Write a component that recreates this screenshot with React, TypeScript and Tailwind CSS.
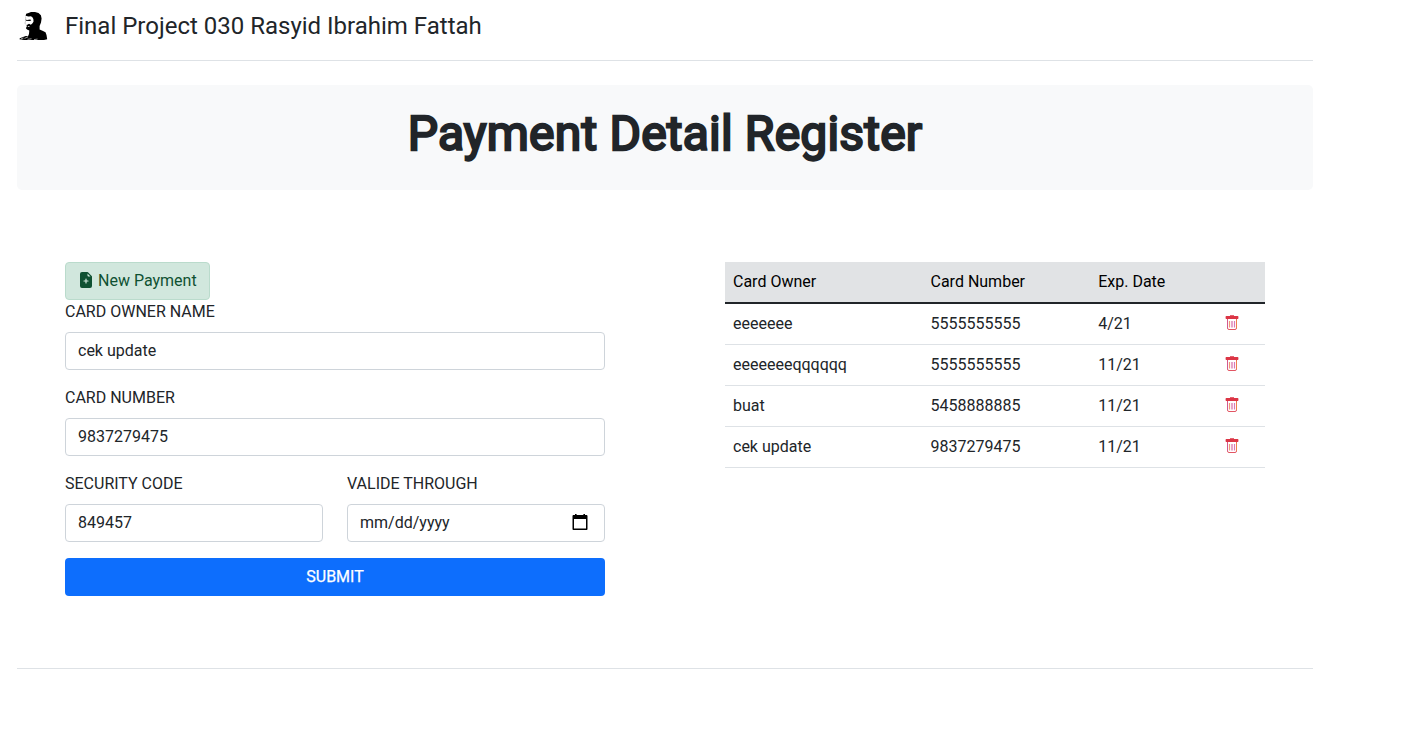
import React from "react";

const payments = [
  { owner: "eeeeeee", number: "5555555555", exp: "4/21" },
  { owner: "eeeeeeeqqqqqq", number: "5555555555", exp: "11/21" },
  { owner: "buat", number: "5458888885", exp: "11/21" },
  { owner: "cek update", number: "9837279475", exp: "11/21" },
];

function Portrait() {
  return (
    <svg width="30" height="30" viewBox="0 0 30 30" fill="#000" aria-hidden="true">
      <path d="M7.600 4.800L8.200 2.800L10.500 1.900L13 .9L17 .9L20.500 2L22.900 4.300L23.600 7.500L23 11.500L21.600 15L21.600 18.400L24.500 19.800L27.500 21.200L28.500 24L29.200 28.300L26 29H6L1.500 28.300L1.800 27.300L5 26L7.800 25L10 25.300L11 23L11.300 19.400L9.500 18.700L8.200 17.800L8 16.400L9.400 15.800L8.300 15.200L8.900 13.900L11 12.700L12.800 13.700L14.300 12.600L15.500 10.700L15.400 8.300L14.600 6.500L13 5.300L10.500 5.500Z" />
      <path d="M7.300 8.400L9 8.900L12.300 8.500L13.300 9.600L11.500 10.100L8 9.700Z" />
      <path d="M7.600 5.500L7.700 9.500L6.900 12.500L8.400 13.300" fill="none" stroke="#999" strokeWidth=".5" />
      <path d="M9.800 15.300L11.600 15.200L11.400 16.100L10 16Z" fill="#fff" />
      <path d="M6.500 27.400L10 25.900M3 27.900L5.500 27M9.500 28.300L13.500 27.800M16 28.600L19.500 28.100" fill="none" stroke="#ddd" strokeWidth=".7" />
    </svg>
  );
}

function NewFileIcon() {
  return (
    <svg width="16" height="16" viewBox="0 0 16 16" fill="currentColor" aria-hidden="true">
      <path d="M9.3 0H4a2 2 0 0 0-2 2v12a2 2 0 0 0 2 2h8a2 2 0 0 0 2-2V4.700a1 1 0 0 0-.3-.7L10 .3a1 1 0 0 0-.7-.3zm.2 3.500v-2l3 3h-2a1 1 0 0 1-1-1z" />
      <path d="M6 9h4M8 7v4" stroke="#d1e7dd" strokeWidth="1.2" strokeLinecap="round" />
    </svg>
  );
}

function TrashIcon() {
  return (
    <svg width="16" height="16" viewBox="0 0 16 16" aria-hidden="true">
      <path d="M3.500 4v9a1.500 1.500 0 0 0 1.500 1.500h6a1.500 1.500 0 0 0 1.500-1.500V4" fill="none" stroke="#e25563" />
      <path d="M3.500 4.500v8.500" stroke="#d05a9a" strokeWidth=".8" />
      <path d="M12.500 4.500v8.500" stroke="#f28a48" strokeWidth=".8" />
      <path d="M5.500 6v6.500" stroke="#ef9a78" strokeWidth="1.2" />
      <path d="M8 6v6.500" stroke="#d869a6" strokeWidth="1.2" />
      <path d="M10.500 6v6.500" stroke="#d979ba" strokeWidth="1.2" />
      <path d="M2.300 1H6V.3h4V1h3.700a.7.700 0 0 1 .7.700v1.600a.7.700 0 0 1-.7.700H2.300a.7.700 0 0 1-.7-.7V1.700a.7.700 0 0 1 .7-.7z" fill="#dc3545" />
    </svg>
  );
}

function Field({ label, value, date }: { label: string; value: string; date?: boolean }) {
  return (
    <label className="mb-4 block">
      <span className="mb-2 block leading-6">{label}</span>
      <span className="flex h-[38px] items-center justify-between rounded-[4px] border border-[#ced4da] bg-white pr-[15.5px] pb-px pl-3 leading-6">
        {value}
        {date && (
          <svg className="mb-0.5" width="18" height="18" viewBox="0 0 18 18" fill="#000" aria-hidden="true">
            <path d="M4 1h1.6v1h6.8V1H14v1h1.4c.6 0 1.1.5 1.1 1.1V16c0 .6-.5 1.1-1.1 1.1H2.6c-.6 0-1.1-.5-1.1-1.1V3.1C1.500 2.500 2 2 2.600 2H4zM3 6v9.600h12V6z" fillRule="evenodd" />
          </svg>
        )}
      </span>
    </label>
  );
}

export default function App() {
  return (
    <main className="h-[729px] overflow-hidden bg-white pl-[17px] font-[Roboto,sans-serif] text-base text-[#212529]">
      <div className="w-[1296px]">
        <header className="flex h-[61px] items-start border-b border-[#dee2e6] pt-2">
          <div className="mt-[3px] mr-[17px] ml-px h-[30px] w-[30px]">
            <Portrait />
          </div>
          <span className="text-2xl leading-9">Final Project 030 Rasyid Ibrahim Fattah</span>
        </header>

        <section className="mt-6 flex h-[105px] justify-center rounded-[5px] bg-[#f8f9fa] pt-5">
          <h1 className="text-[48px] leading-[57px] font-normal tracking-[0.2px] [-webkit-text-stroke:2.3px_#212529]">
            Payment Detail Register
          </h1>
        </section>

        <section className="grid h-[479px] grid-cols-[540px_540px] gap-[120px] border-b border-[#dee2e6] px-12 pt-[72px]">
          <form>
            <button type="button" className="flex h-[38px] w-[145px] items-center gap-1 rounded-[4px] border border-[#badbcc] bg-[#d1e7dd] pb-px pl-3 text-[#0f5132]">
              <span className="mb-0.5"><NewFileIcon /></span>
              New Payment
            </button>
            <Field label="CARD OWNER NAME" value="cek update" />
            <Field label="CARD NUMBER" value="9837279475" />
            <div className="grid grid-cols-2 gap-6">
              <Field label="SECURITY CODE" value="849457" />
              <Field label="VALIDE THROUGH" value="mm/dd/yyyy" date />
            </div>
            <button type="button" className="flex h-[38px] w-full items-center justify-center rounded-[4px] bg-[#0d6efd] pb-px text-white [-webkit-text-stroke:0.25px_#ffffff]">
              SUBMIT
            </button>
          </form>

          <table className="w-full table-fixed border-collapse self-start text-left">
            <colgroup>
              <col className="w-[197px]" />
              <col className="w-[168px]" />
              <col className="w-[127px]" />
              <col className="w-[48px]" />
            </colgroup>
            <thead>
              <tr className="h-[41px] border-b-2 border-[#212529] bg-[#e1e3e5] text-black">
                <th className="px-2 font-normal">Card Owner</th>
                <th className="pr-2 pl-[8.5px] font-normal">Card Number</th>
                <th className="pr-2 pl-[8.2px] font-normal">Exp. Date</th>
                <th />
              </tr>
            </thead>
            <tbody>
              {payments.map((payment) => (
                <tr key={payment.owner} className="h-[41px] border-b border-[#dee2e6]">
                  <td className="px-2">{payment.owner}</td>
                  <td className="pr-2 pl-[8.5px]">{payment.number}</td>
                  <td className="pr-2 pl-[8.2px]">{payment.exp}</td>
                  <td className="pb-0.5 pl-[7.4px]"><TrashIcon /></td>
                </tr>
              ))}
            </tbody>
          </table>
        </section>
      </div>
    </main>
  );
}
